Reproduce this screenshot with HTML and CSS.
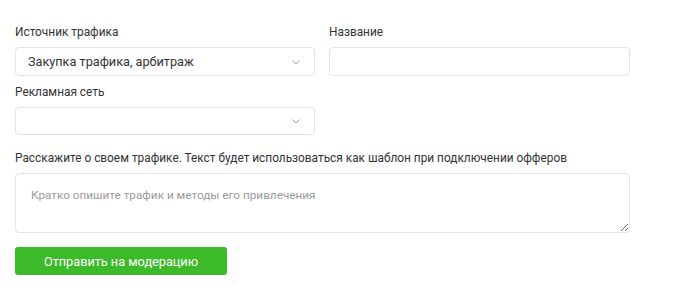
FILE: index.html
```html
<!DOCTYPE html>
<html lang="ru">
<head>
<meta charset="utf-8">
<title>Форма</title>
<link rel="stylesheet" href="styles.css">
</head>
<body>
<form class="form">
  <div class="grid">
    <div class="field">
      <label class="label">Источник трафика</label>
      <div class="select">
        <span class="select-value">Закупка трафика, арбитраж</span>
        <svg class="chev" width="8" height="5" viewBox="0 0 8 5"><path d="M0.5 0.5 L4 4 L7.5 0.5" fill="none" stroke="#aaa" stroke-width="1"/></svg>
      </div>
    </div>
    <div class="field">
      <label class="label">Название</label>
      <input class="input" type="text">
    </div>
    <div class="field">
      <label class="label">Рекламная сеть</label>
      <div class="select select-sm">
        <span class="select-value"></span>
        <svg class="chev" width="8" height="5" viewBox="0 0 8 5"><path d="M0.5 0.5 L4 4 L7.5 0.5" fill="none" stroke="#aaa" stroke-width="1"/></svg>
      </div>
    </div>
  </div>
  <div class="field field-wide">
    <label class="label">Расскажите о своем трафике. Текст будет использоваться как шаблон при подключении офферов</label>
    <textarea class="textarea" placeholder="Кратко опишите трафик и методы его привлечения"></textarea>
  </div>
  <button class="btn" type="button">Отправить на модерацию</button>
</form>
</body>
</html>
```
FILE: styles.css
```css
* { box-sizing: border-box; }
html, body { margin: 0; background: #fff; }
body {
  font-family: Roboto, "Noto Sans", Arial, sans-serif;
  font-size: 13px;
  color: #333;
}
.form {
  padding: 25px 0 0 15px;
  width: 630px;
}
.grid {
  display: grid;
  grid-template-columns: 300px 301px;
  column-gap: 14px;
  row-gap: 9px;
}
.field {
  display: flex;
  flex-direction: column;
  gap: 7px;
}
.field-wide {
  margin-top: 16px;
  width: 615px;
}
.label {
  display: block;
  font-size: 11.85px;
  line-height: 15px;
  color: #333;
}
.select, .input {
  height: 29px;
  border: 1px solid #e3e3e3;
  border-radius: 4px;
  background: #fff;
}
.select {
  display: flex;
  align-items: center;
  justify-content: space-between;
  padding: 0 14px 0 12px;
}
.select-sm { height: 28px; }
.select-value { color: #333; font-size: 12.7px; line-height: 15px; }
.chev { display: block; margin-top: 1px; }
.input {
  width: 100%;
  font: inherit;
  padding: 0 12px;
  outline: none;
}
.textarea {
  display: block;
  width: 615px;
  height: 60px;
  border: 1px solid #e3e3e3;
  border-radius: 4px;
  padding: 14px 15px;
  font: inherit;
  font-size: 11.75px;
  line-height: 15px;
  color: #333;
  resize: vertical;
  outline: none;
}
.textarea::placeholder { color: #9a9a9a; }
.btn {
  display: block;
  margin-top: 14px;
  width: 212px;
  height: 28px;
  border: 0;
  border-radius: 3px;
  background: #3cba29;
  color: #fff;
  font: inherit;
  font-size: 12.7px;
  cursor: pointer;
}
```
